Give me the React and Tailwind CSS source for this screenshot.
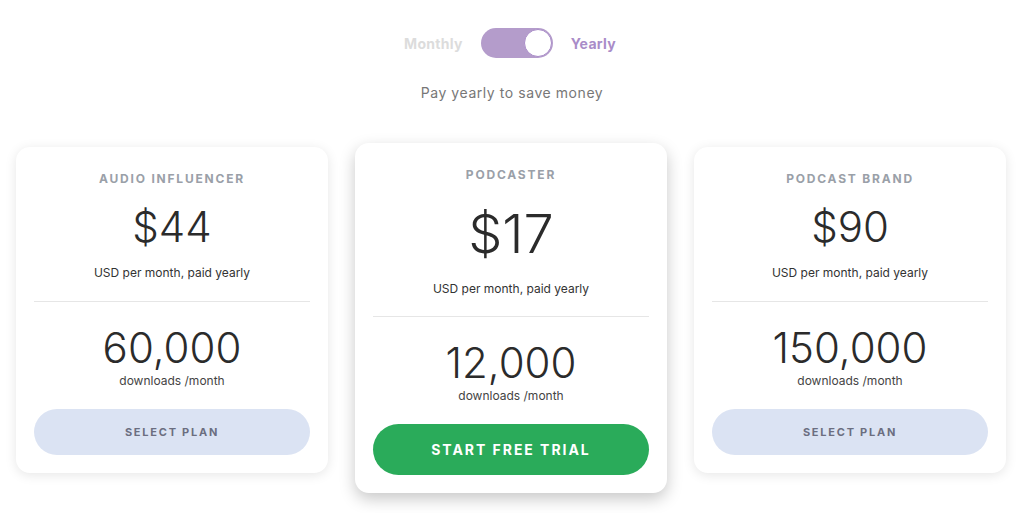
import { useState } from 'react';

const plans = [
    { name: 'AUDIO INFLUENCER', price: '$44', downloads: '60,000' },
    { name: 'PODCASTER', price: '$17', downloads: '12,000', featured: true },
    { name: 'PODCAST BRAND', price: '$90', downloads: '150,000' },
];

function PlanCard({ plan }) {
    const featured = plan.featured;
    return (
        <div
            className={`w-[312px] bg-white rounded-[14px] px-[18px] flex flex-col items-center ${
                featured
                    ? 'pt-[26px] pb-[18px] shadow-[0_6px_16px_rgba(0,0,0,0.22)]'
                    : 'mt-[4px] pt-[26px] pb-[18px] shadow-[0_2px_12px_rgba(0,0,0,0.10)]'
            }`}
        >
            <h3 className="text-[12px] font-bold tracking-[0.15em] text-[#9aa0a8] leading-none">
                {plan.name}
            </h3>
            <div
                className={`text-[#2b2b2b] font-light leading-none ${
                    featured ? 'text-[54px] mt-[26px]' : 'text-[42px] mt-[21px]'
                }`}
            >
                {plan.price}
            </div>
            <p className={`text-[12px] text-[#333] ${featured ? 'mt-[19px]' : 'mt-[16px]'}`}>
                USD per month, paid yearly
            </p>
            <div className={`w-full h-px bg-[#e6e6e6] ${featured ? 'mt-[18px]' : 'mt-[19px]'}`} />
            <div className="text-[42px] font-light leading-[51px] text-[#2b2b2b] mt-[20px]">
                {plan.downloads}
            </div>
            <p className="text-[12px] text-[#444] leading-[15px]">downloads /month</p>
            {featured ? (
                <button className="w-full h-[51px] mt-[21px] rounded-full bg-[#2aab5a] text-white text-[14px] font-bold tracking-[0.14em]">
                    START FREE TRIAL
                </button>
            ) : (
                <button className="w-full h-[46px] mt-[21px] rounded-full bg-[#dbe3f3] text-[#6b6e80] text-[11px] font-bold tracking-[0.16em]">
                    SELECT PLAN
                </button>
            )}
        </div>
    );
}

export default function App() {
    const [yearly, setYearly] = useState(true);

    return (
        <div className="min-h-[513px] bg-white flex flex-col items-center pt-[28px] font-['Inter','Open_Sans',sans-serif]">
            {/* Billing toggle */}
            <div className="flex items-center gap-[18px] -ml-[4px]">
                <span className={`text-[14px] font-bold tracking-[0.02em] ${yearly ? 'text-[#dcdcdc]' : 'text-[#a98cc8]'}`}>
                    Monthly
                </span>
                <button
                    onClick={() => setYearly(!yearly)}
                    className="w-[72px] h-[30px] rounded-full bg-[#b49ccb] flex items-center px-[1px]"
                >
                    <span
                        className={`w-[28px] h-[28px] rounded-full bg-white border border-[#a98cc8] ${
                            yearly ? 'ml-auto' : ''
                        }`}
                    />
                </button>
                <span className={`text-[14px] font-bold tracking-[0.02em] ${yearly ? 'text-[#a98cc8]' : 'text-[#dcdcdc]'}`}>
                    Yearly
                </span>
            </div>
            <p className="mt-[24px] text-[14px] tracking-[0.04em] text-[#777]">Pay yearly to save money</p>

            {/* Plans */}
            <div className="mt-[40px] flex items-start gap-[27px] -ml-[2px]">
                {plans.map((plan) => (
                    <PlanCard key={plan.name} plan={plan} />
                ))}
            </div>
        </div>
    );
}
